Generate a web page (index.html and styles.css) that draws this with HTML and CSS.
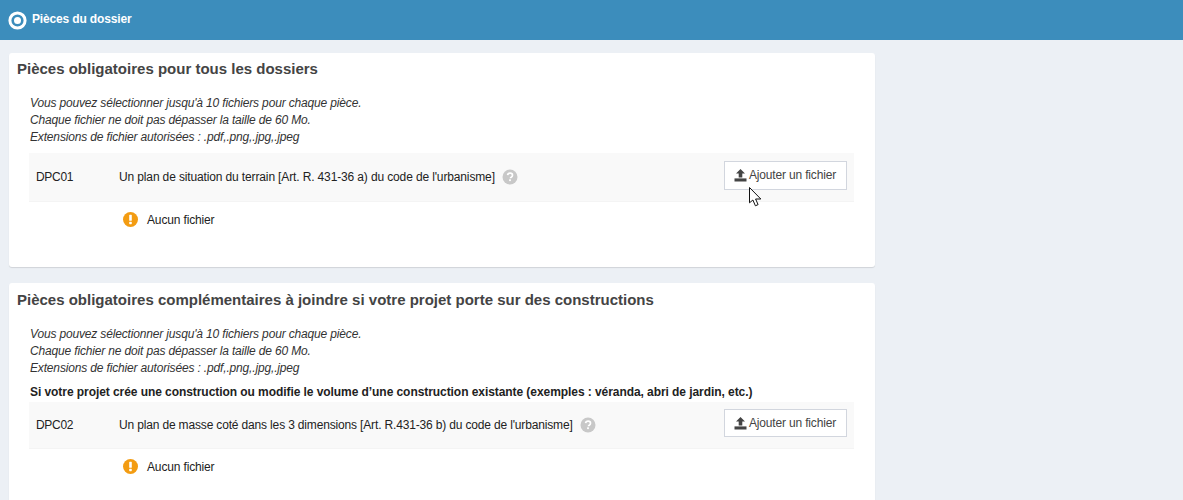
FILE: index.html
```html
<!DOCTYPE html>
<html lang="fr">
<head>
<meta charset="utf-8">
<title>Pièces du dossier</title>
<link rel="stylesheet" href="styles.css">
</head>
<body>
<header class="topbar">
  <svg class="topbar-icon" width="20" height="20" viewBox="0 0 20 20"><circle cx="9.5" cy="10.5" r="7.6" fill="none" stroke="#fff" stroke-width="3"/><circle cx="9.5" cy="10.5" r="3.5" fill="#fff"/></svg>
  <span class="topbar-title">Pièces du dossier</span>
</header>
<main class="content">
  <section class="card card-first">
    <h2 class="card-title">Pièces obligatoires pour tous les dossiers</h2>
    <div class="notes">
      <p>Vous pouvez sélectionner jusqu'à 10 fichiers pour chaque pièce.</p>
      <p>Chaque fichier ne doit pas dépasser la taille de 60 Mo.</p>
      <p>Extensions de fichier autorisées : .pdf,.png,.jpg,.jpeg</p>
    </div>
    <div class="piece">
      <span class="piece-code">DPC01</span>
      <span class="piece-label">Un plan de situation du terrain [Art. R. 431-36 a) du code de l'urbanisme]</span>
      <svg class="help" width="16" height="16" viewBox="0 0 16 16"><circle cx="8" cy="8" r="7.5" fill="#c8c8c8"/><path d="M5.6 6.2C5.8 4.9 6.8 4.2 8.1 4.2c1.4 0 2.4.8 2.4 2 0 1-.6 1.5-1.3 2-.5.3-.7.6-.7 1.1" fill="none" stroke="#fff" stroke-width="1.7"/><rect x="7.1" y="10.3" width="1.8" height="1.8" fill="#fff"/></svg>
      <button class="upload" type="button">
        <svg width="13" height="13" viewBox="0 0 13 13"><path d="M6.5 0 11 4.6H8.3V8.4H4.7V4.6H2z" fill="#444"/><rect x="0.5" y="9.4" width="12" height="3.1" fill="#444"/></svg>
        <span>Ajouter un fichier</span>
      </button>
    </div>
    <div class="status">
      <svg width="15" height="15" viewBox="0 0 15 15"><circle cx="7.5" cy="7.5" r="7.5" fill="#f39c12"/><rect x="6.2" y="2.8" width="2.6" height="6" rx=".6" fill="#fff"/><rect x="6.2" y="9.8" width="2.6" height="2.4" rx=".6" fill="#fff"/></svg>
      <span>Aucun fichier</span>
    </div>
  </section>
  <section class="card card-second">
    <h2 class="card-title">Pièces obligatoires complémentaires à joindre si votre projet porte sur des constructions</h2>
    <div class="notes">
      <p>Vous pouvez sélectionner jusqu'à 10 fichiers pour chaque pièce.</p>
      <p>Chaque fichier ne doit pas dépasser la taille de 60 Mo.</p>
      <p>Extensions de fichier autorisées : .pdf,.png,.jpg,.jpeg</p>
    </div>
    <h3 class="subhead">Si votre projet crée une construction ou modifie le volume d’une construction existante (exemples : véranda, abri de jardin, etc.)</h3>
    <div class="piece piece-second">
      <span class="piece-code">DPC02</span>
      <span class="piece-label">Un plan de masse coté dans les 3 dimensions [Art. R.431-36 b) du code de l'urbanisme]</span>
      <svg class="help" width="16" height="16" viewBox="0 0 16 16"><circle cx="8" cy="8" r="7.5" fill="#c8c8c8"/><path d="M5.6 6.2C5.8 4.9 6.8 4.2 8.1 4.2c1.4 0 2.4.8 2.4 2 0 1-.6 1.5-1.3 2-.5.3-.7.6-.7 1.1" fill="none" stroke="#fff" stroke-width="1.7"/><rect x="7.1" y="10.3" width="1.8" height="1.8" fill="#fff"/></svg>
      <button class="upload" type="button">
        <svg width="13" height="13" viewBox="0 0 13 13"><path d="M6.5 0 11 4.6H8.3V8.4H4.7V4.6H2z" fill="#444"/><rect x="0.5" y="9.4" width="12" height="3.1" fill="#444"/></svg>
        <span>Ajouter un fichier</span>
      </button>
    </div>
    <div class="status">
      <svg width="15" height="15" viewBox="0 0 15 15"><circle cx="7.5" cy="7.5" r="7.5" fill="#f39c12"/><rect x="6.2" y="2.8" width="2.6" height="6" rx=".6" fill="#fff"/><rect x="6.2" y="9.8" width="2.6" height="2.4" rx=".6" fill="#fff"/></svg>
      <span>Aucun fichier</span>
    </div>
  </section>
</main>
<svg class="cursor" width="14" height="20" viewBox="0 0 14 20"><path d="M0.5 0.5V15.8L3.9 13 6.4 18.8 9.1 17.6 6.6 12H11.8z" fill="#fff" stroke="#111" stroke-width="1"/></svg>
</body>
</html>
```
FILE: styles.css
```css
html, body {
  margin: 0;
  height: 500px;
  overflow: hidden;
}
body {
  position: relative;
  background: #ecf0f5;
  font-family: "Liberation Sans", Arial, sans-serif;
  font-size: 12px;
  color: #333;
}
.topbar {
  height: 40px;
  box-sizing: border-box;
  background: #3c8dbc;
  display: flex;
  align-items: flex-start;
  padding: 10px 0 0 8px;
  gap: 4px;
}
.topbar-title {
  color: #fff;
  font-weight: bold;
  font-size: 12px;
  line-height: 17px;
  margin-top: 1px;
  letter-spacing: -.15px;
}
.content {
  padding: 13px 308px 0 9px;
}
.card {
  background: #fff;
  border-radius: 3px;
  box-shadow: 0 1px 1px rgba(0, 0, 0, .12);
  padding: 7px 21px 0 8px;
  margin-bottom: 16px;
  height: 400px;
  box-sizing: border-box;
}
.card-first {
  height: 214px;
}
.card-second {
  padding-top: 8px;
}
.card-title {
  margin: 0;
  font-size: 15px;
  line-height: 17px;
  font-weight: bold;
  color: #444;
}
.notes {
  margin: 18px 0 0 13px;
  font-style: italic;
  color: #333;
  line-height: 17px;
  letter-spacing: -.16px;
}
.notes p {
  margin: 0;
}
.subhead {
  margin: 8px 0 2px 13px;
  font-size: 12px;
  line-height: 15px;
  font-weight: bold;
  color: #222;
  letter-spacing: -.065px;
}
.piece {
  margin: 7px 0 0 12px;
  height: 49px;
  box-sizing: border-box;
  background: #f9f9f9;
  border-bottom: 1px solid #f4f4f4;
  display: flex;
  align-items: center;
  padding: 0 7px;
  letter-spacing: -.135px;
  color: #222;
}
.piece-second {
  margin-top: 0;
  height: 47px;
  letter-spacing: -.16px;
}
.piece-code {
  width: 83px;
  flex: none;
  letter-spacing: -.3px;
}
.help {
  margin-left: 7px;
  flex: none;
}
.upload {
  margin-left: auto;
  height: 29px;
  width: 123px;
  box-sizing: border-box;
  background: #fff;
  border: 1px solid #d2d6de;
  border-radius: 0;
  padding: 0 0 0 9px;
  display: flex;
  align-items: center;
  gap: 2px;
  font: 12px "Liberation Sans", Arial, sans-serif;
  letter-spacing: -.17px;
  color: #444;
  position: relative;
  top: -2px;
}
.piece-second .upload {
  height: 28px;
}
.status {
  display: flex;
  align-items: center;
  gap: 9px;
  margin: 10px 0 0 106px;
  height: 15px;
  color: #222;
  letter-spacing: -.15px;
}
.cursor {
  position: absolute;
  left: 749px;
  top: 187px;
}
```
